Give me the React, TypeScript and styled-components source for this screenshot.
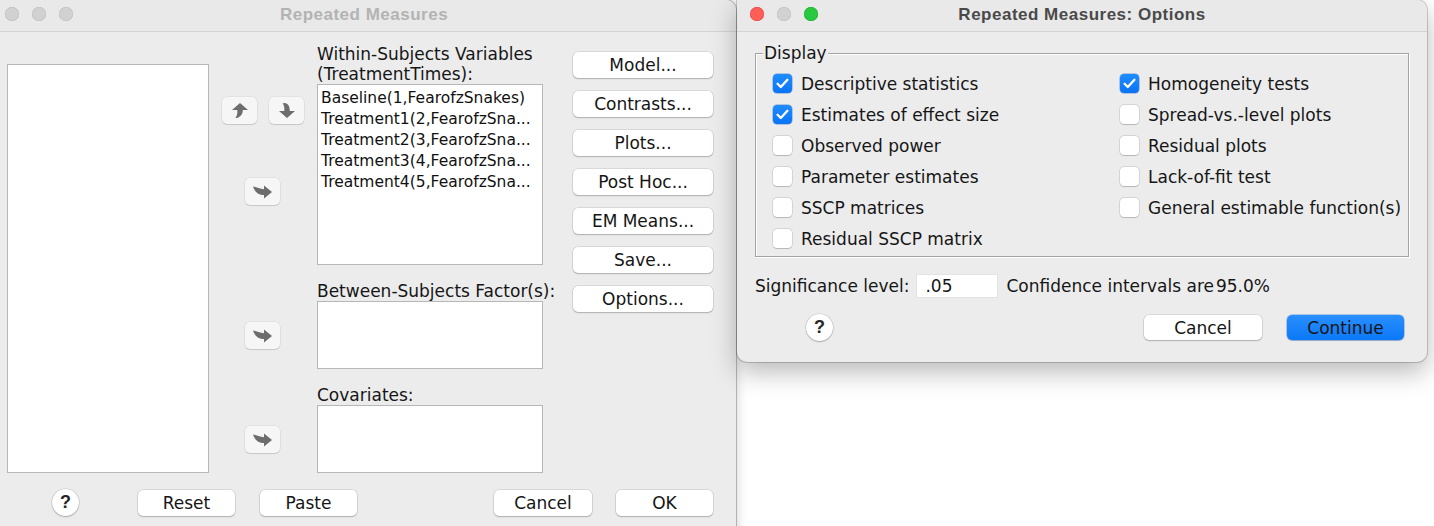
import React from "react";
import styled, { createGlobalStyle } from "styled-components";

const Global = createGlobalStyle`
  html, body { margin: 0; padding: 0; background: #ffffff; }
  body { width: 1434px; height: 526px; overflow: hidden; position: relative; }
  #root { position: relative; width: 1434px; height: 526px; }
`;

const UI_FONT = `"DejaVu Sans", "Noto Sans", sans-serif`;
const TITLE_FONT = `"Liberation Sans", Arial, sans-serif`;

const Desktop = styled.div`
  position: relative;
  width: 1434px;
  height: 526px;
  overflow: hidden;
  background: #ffffff;
  font-family: ${UI_FONT};
  color: #1c1c1c;
`;

const Window = styled.div<{ $left: number; $width: number; $height: number; $front?: boolean }>`
  position: absolute;
  top: 0;
  left: ${(p) => p.$left}px;
  width: ${(p) => p.$width}px;
  height: ${(p) => p.$height}px;
  background: #ececec;
  display: flex;
  flex-direction: column;
  border-radius: ${(p) => (p.$front ? "0 10px 10px 10px" : "0 10px 0 0")};
  box-shadow: ${(p) =>
    p.$front
      ? "0 0 0 1px rgba(0,0,0,0.18), 0 10px 26px rgba(0,0,0,0.28)"
      : "0 0 0 1px rgba(0,0,0,0.22), 0 0 12px rgba(0,0,0,0.22)"};
  z-index: ${(p) => (p.$front ? 2 : 1)};
  overflow: hidden;
`;

const TitleBar = styled.div`
  height: 31px;
  flex: 0 0 31px;
  border-bottom: 1px solid #d3d3d3;
  background: #e9e9e9;
  display: flex;
  align-items: center;
  position: relative;
`;

const Lights = styled.div`
  display: flex;
  gap: 13px;
  padding-left: 13px;
  margin-top: -4px;
`;

const Light = styled.span<{ $color: string; $border: string }>`
  width: 14px;
  height: 14px;
  border-radius: 50%;
  background: ${(p) => p.$color};
  box-shadow: inset 0 0 0 0.5px ${(p) => p.$border};
`;

const Title = styled.div<{ $active?: boolean }>`
  position: absolute;
  left: 0;
  right: 0;
  top: 5px;
  text-align: center;
  font-family: ${TITLE_FONT};
  font-weight: 700;
  font-size: 17px;
  letter-spacing: 0.5px;
  color: ${(p) => (p.$active ? "#4a4a4a" : "#b3b3b3")};
  pointer-events: none;
`;

/* ---------- Left window ---------- */

const MainRow = styled.div`
  display: flex;
  padding-left: 15px;
`;

const ListBox = styled.div<{ $w: number; $h: number; $mt?: number }>`
  width: ${(p) => p.$w}px;
  height: ${(p) => p.$h}px;
  margin-top: ${(p) => p.$mt ?? 0}px;
  background: #ffffff;
  border: 1px solid #b7b7b7;
  box-sizing: border-box;
  padding: 3px 0 0 3px;
  overflow: hidden;
`;

const ListItem = styled.div`
  font-size: 15.5px;
  line-height: 21px;
  white-space: nowrap;
  color: #111;
`;

const ArrowCol = styled.div`
  width: 108px;
  display: flex;
  flex-direction: column;
`;

const ArrowPair = styled.div`
  display: flex;
  gap: 12px;
  margin-top: 65px;
  margin-left: 13px;
`;

const ArrowBtn = styled.div<{ $mt?: number; $ml?: number }>`
  width: 35px;
  height: 27px;
  margin-top: ${(p) => p.$mt ?? 0}px;
  margin-left: ${(p) => p.$ml ?? 0}px;
  border-radius: 5px;
  background: #f6f6f6;
  box-shadow: 0 0 0 0.5px rgba(0, 0, 0, 0.08), 0 1px 1px rgba(0, 0, 0, 0.12);
  display: flex;
  align-items: center;
  justify-content: center;
`;

const TargetCol = styled.div`
  width: 226px;
  display: flex;
  flex-direction: column;
`;

const FieldLabel = styled.div<{ $mt: number }>`
  margin-top: ${(p) => p.$mt}px;
  font-size: 17px;
  line-height: 20px;
  white-space: nowrap;
  color: #161616;
`;

const ButtonCol = styled.div`
  width: 140px;
  margin-left: 30px;
  margin-top: 20px;
  display: flex;
  flex-direction: column;
  gap: 13px;
`;

const PushButton = styled.div<{ $w?: number; $h?: number; $primary?: boolean }>`
  width: ${(p) => (p.$w ? `${p.$w}px` : "100%")};
  height: ${(p) => p.$h ?? 26}px;
  box-sizing: border-box;
  border-radius: 5px;
  background: ${(p) => (p.$primary ? "linear-gradient(#2a8fff, #0a78f6)" : "#ffffff")};
  box-shadow: ${(p) =>
    p.$primary
      ? "0 0 0 0.5px rgba(0,80,200,0.5), 0 1px 1px rgba(0,0,0,0.15)"
      : "0 0 0 0.5px rgba(0,0,0,0.16), 0 1px 1.5px rgba(0,0,0,0.2)"};
  display: flex;
  align-items: center;
  justify-content: center;
  font-size: 17px;
  color: #151515;
  white-space: nowrap;
  flex: 0 0 auto;
`;

const Footer = styled.div<{ $mt: number; $pl: number }>`
  display: flex;
  align-items: center;
  margin-top: ${(p) => p.$mt}px;
  padding-left: ${(p) => p.$pl}px;
`;

const Gap = styled.div<{ $w: number }>`
  width: ${(p) => p.$w}px;
  flex: 0 0 auto;
`;

const HelpButton = styled.div`
  width: 27px;
  height: 27px;
  border-radius: 50%;
  background: #ffffff;
  box-shadow: 0 0 0 0.5px rgba(0, 0, 0, 0.16), 0 1px 1.5px rgba(0, 0, 0, 0.22);
  display: flex;
  align-items: center;
  justify-content: center;
  font-family: ${TITLE_FONT};
  font-weight: 700;
  font-size: 18px;
  color: #262626;
  flex: 0 0 auto;
`;

/* ---------- Options window ---------- */

const OptionsBody = styled.div`
  padding: 0 18px;
  display: flex;
  flex-direction: column;
`;

const GroupBox = styled.div`
  position: relative;
  margin-top: 21px;
  border: 1px solid #a3a3a3;
  box-shadow: 1px 1px 0 #ffffff, inset 1px 1px 0 #ffffff;
  padding: 14px 0 2px 17px;
  display: flex;
`;

const Legend = styled.span`
  position: absolute;
  top: -11px;
  left: 7px;
  padding: 0 1px;
  background: #ececec;
  font-size: 17px;
  line-height: 20px;
  color: #161616;
`;

const CheckColumn = styled.div<{ $w?: number }>`
  width: ${(p) => (p.$w ? `${p.$w}px` : "auto")};
  display: flex;
  flex-direction: column;
`;

const CheckRow = styled.div`
  height: 31px;
  display: flex;
  align-items: center;
  gap: 9px;
  font-size: 17px;
  white-space: nowrap;
  color: #161616;
`;

const Box = styled.span<{ $checked?: boolean }>`
  width: 19px;
  height: 19px;
  box-sizing: border-box;
  border-radius: 4px;
  flex: 0 0 auto;
  display: flex;
  align-items: center;
  justify-content: center;
  background: ${(p) => (p.$checked ? "linear-gradient(#1f8cff, #0a74f5)" : "#ffffff")};
  box-shadow: ${(p) =>
    p.$checked
      ? "0 0 0 0.5px rgba(0,70,180,0.5)"
      : "0 0 0 0.5px rgba(0,0,0,0.18), 0 0.5px 1px rgba(0,0,0,0.15)"};
`;

const SigRow = styled.div`
  margin-top: 17px;
  height: 24px;
  display: flex;
  align-items: center;
  font-size: 17px;
  color: #161616;
  white-space: nowrap;
`;

const SigInput = styled.div`
  width: 82px;
  height: 24px;
  box-sizing: border-box;
  margin: 0 8px 0 7px;
  background: #ffffff;
  border: 1px solid #e3e3e3;
  padding-left: 8px;
  display: flex;
  align-items: center;
  font-size: 17px;
`;

const Percent = styled.span`
  margin-left: 2px;
`;

const OptFooter = styled.div`
  margin-top: 16px;
  display: flex;
  align-items: center;
  padding-left: 51px;
  padding-right: 5px;
`;

const Spacer = styled.div`
  flex: 1;
`;

/* ---------- Icons ---------- */

const ICON = "#6d6d6d";

const UpArrow = () => (
  <svg width="16" height="15" viewBox="0 0 16 15">
    <path d="M8 0 L16 7 L10.8 7 C10.8 10 9.8 13 5.2 15 L3.4 15 C5.4 12.5 5.5 10 5.3 7 L0 7 Z" fill={ICON} />
  </svg>
);

const DownArrow = () => (
  <svg width="16" height="15" viewBox="0 0 16 15">
    <path d="M5.4 0 C9.4 0.6 10.8 3.4 10.8 8 L16 8 L8 15 L0 8 L5.3 8 C5.5 5.2 5.4 2.6 3.6 0.6 Z" fill={ICON} />
  </svg>
);

const RightArrow = () => (
  <svg width="19" height="14" viewBox="0 0 19 14">
    <path d="M0 1.5 C3 1.8 6.5 3.8 11 4.2 L11 0.5 L19 7 L11 13.5 L11 10 C6 10 2 7.5 0 1.5 Z" fill={ICON} />
  </svg>
);

const CheckMark = () => (
  <svg width="13" height="11" viewBox="0 0 13 11">
    <path d="M1.6 5.8 L4.8 9 L11.4 1.8" stroke="#ffffff" strokeWidth="2.3" fill="none" strokeLinecap="round" strokeLinejoin="round" />
  </svg>
);

const Check = ({ label, checked }: { label: string; checked?: boolean }) => (
  <CheckRow>
    <Box $checked={checked}>{checked && <CheckMark />}</Box>
    <span>{label}</span>
  </CheckRow>
);

const sideButtons = ["Model...", "Contrasts...", "Plots...", "Post Hoc...", "EM Means...", "Save...", "Options..."];
const withinItems = [
  "Baseline(1,FearofzSnakes)",
  "Treatment1(2,FearofzSna...",
  "Treatment2(3,FearofzSna...",
  "Treatment3(4,FearofzSna...",
  "Treatment4(5,FearofzSna...",
];

const leftChecks: [string, boolean][] = [
  ["Descriptive statistics", true],
  ["Estimates of effect size", true],
  ["Observed power", false],
  ["Parameter estimates", false],
  ["SSCP matrices", false],
  ["Residual SSCP matrix", false],
];
const rightChecks: [string, boolean][] = [
  ["Homogeneity tests", true],
  ["Spread-vs.-level plots", false],
  ["Residual plots", false],
  ["Lack-of-fit test", false],
  ["General estimable function(s)", false],
];

export default function App() {
  return (
    <Desktop>
      <Global />
      <Window $left={-8} $width={744} $height={560}>
        <TitleBar>
          <Lights>
            <Light $color="#d1d1d1" $border="#bcbcbc" />
            <Light $color="#d1d1d1" $border="#bcbcbc" />
            <Light $color="#d1d1d1" $border="#bcbcbc" />
          </Lights>
          <Title>Repeated Measures</Title>
        </TitleBar>
        <MainRow>
          <ListBox $w={202} $h={409} $mt={32} />
          <ArrowCol>
            <ArrowPair>
              <ArrowBtn>
                <UpArrow />
              </ArrowBtn>
              <ArrowBtn>
                <DownArrow />
              </ArrowBtn>
            </ArrowPair>
            <ArrowBtn $mt={54} $ml={36}>
              <RightArrow />
            </ArrowBtn>
            <ArrowBtn $mt={117} $ml={36}>
              <RightArrow />
            </ArrowBtn>
            <ArrowBtn $mt={77} $ml={36}>
              <RightArrow />
            </ArrowBtn>
          </ArrowCol>
          <TargetCol>
            <FieldLabel $mt={12}>
              Within-Subjects Variables
              <br />
              (TreatmentTimes):
            </FieldLabel>
            <ListBox $w={226} $h={181}>
              {withinItems.map((t) => (
                <ListItem key={t}>{t}</ListItem>
              ))}
            </ListBox>
            <FieldLabel $mt={16}>Between-Subjects Factor(s):</FieldLabel>
            <ListBox $w={226} $h={68} />
            <FieldLabel $mt={16}>Covariates:</FieldLabel>
            <ListBox $w={226} $h={68} />
          </TargetCol>
          <ButtonCol>
            {sideButtons.map((b) => (
              <PushButton key={b}>{b}</PushButton>
            ))}
          </ButtonCol>
        </MainRow>
        <Footer $mt={16} $pl={60}>
          <HelpButton>?</HelpButton>
          <Gap $w={59} />
          <PushButton $w={97}>Reset</PushButton>
          <Gap $w={25} />
          <PushButton $w={97}>Paste</PushButton>
          <Gap $w={137} />
          <PushButton $w={98}>Cancel</PushButton>
          <Gap $w={24} />
          <PushButton $w={97}>OK</PushButton>
        </Footer>
      </Window>

      <Window $left={737} $width={690} $height={362} $front>
        <TitleBar>
          <Lights>
            <Light $color="#ff5f57" $border="#e0443e" />
            <Light $color="#d1d1d1" $border="#bcbcbc" />
            <Light $color="#28c840" $border="#1aab29" />
          </Lights>
          <Title $active>Repeated Measures: Options</Title>
        </TitleBar>
        <OptionsBody>
          <GroupBox>
            <Legend>Display</Legend>
            <CheckColumn $w={347}>
              {leftChecks.map(([l, c]) => (
                <Check key={l} label={l} checked={c} />
              ))}
            </CheckColumn>
            <CheckColumn>
              {rightChecks.map(([l, c]) => (
                <Check key={l} label={l} checked={c} />
              ))}
            </CheckColumn>
          </GroupBox>
          <SigRow>
            <span>Significance level:</span>
            <SigInput>.05</SigInput>
            <span>
              Confidence intervals are<Percent>95.0%</Percent>
            </span>
          </SigRow>
          <OptFooter>
            <HelpButton>?</HelpButton>
            <Spacer />
            <PushButton $w={118} $h={25}>
              Cancel
            </PushButton>
            <Gap $w={25} />
            <PushButton $w={117} $h={25} $primary>
              Continue
            </PushButton>
          </OptFooter>
        </OptionsBody>
      </Window>
    </Desktop>
  );
}
